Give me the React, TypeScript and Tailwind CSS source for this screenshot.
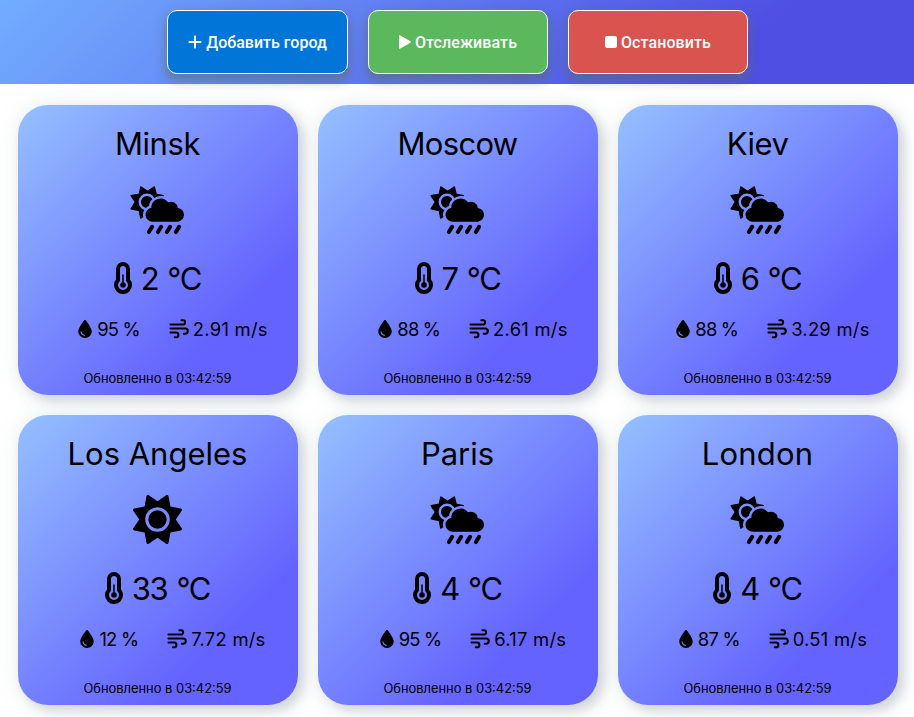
import { FaDroplet, FaPlus, FaStop, FaSun } from "react-icons/fa6";

interface City {
  name: string;
  tracking: string;
  temp: number;
  humidity: number;
  wind: string;
  sunny?: boolean;
}

const cities: City[] = [
  { name: "Minsk", tracking: "tracking-[-0.4px]", temp: 2, humidity: 95, wind: "2.91" },
  { name: "Moscow", tracking: "tracking-[-0.7px]", temp: 7, humidity: 88, wind: "2.61" },
  { name: "Kiev", tracking: "tracking-[-0.5px]", temp: 6, humidity: 88, wind: "3.29" },
  { name: "Los Angeles", tracking: "tracking-normal", temp: 33, humidity: 12, wind: "7.72", sunny: true },
  { name: "Paris", tracking: "tracking-normal", temp: 4, humidity: 95, wind: "6.17" },
  { name: "London", tracking: "tracking-[0.2px]", temp: 4, humidity: 87, wind: "0.51" },
];

const buttonBase =
  "flex h-16 items-center justify-center gap-[3px] whitespace-nowrap rounded-[10px] border border-white text-base text-white shadow-[0_5px_10px_2px_rgba(90,105,105,0.55)]";

function Thermometer() {
  return (
    <svg viewBox="0 0 18 32" className="mb-0.5 h-8 w-[18px]" fill="none" stroke="currentColor">
      <path d="M4 7a5 5 0 0 1 10 0v11.1a7 7 0 1 1-10 0z" strokeWidth="4" />
      <path d="M9 13V23" strokeWidth="1.5" strokeLinecap="round" />
      <circle cx="9" cy="23" r="2.8" fill="currentColor" stroke="none" />
    </svg>
  );
}

function Play() {
  return (
    <svg viewBox="0 0 14 16" className="h-4 w-3.5" fill="currentColor" stroke="currentColor">
      <path d="M1.6 1.7v12.6L12.4 8z" strokeWidth="1.2" strokeLinejoin="round" />
    </svg>
  );
}

function Wind() {
  return (
    <svg
      viewBox="0 0 20 20"
      className="size-5"
      fill="none"
      stroke="currentColor"
      strokeWidth="2.1"
      strokeLinecap="round"
    >
      <path d="M1.5 5.5H14a2.1 2.1 0 0 0 0-4.2h-1.6" />
      <path d="M1.5 9.5H16.2a2.6 2.6 0 0 1 0 5.2h-1.4" />
      <path d="M1.5 13.5H7a2.4 2.4 0 0 1 0 4.8H5.8" />
    </svg>
  );
}

const cloudPath =
  "M22.5 36.7A7 7 0 0 1 21.3 22.8A9.3 9.3 0 0 1 38 17.3A7 7 0 0 1 47.8 22.9A6.95 6.95 0 0 1 48 36.7z";

function SunRain() {
  return (
    <svg viewBox="0 0 56 50" className="h-[50px] w-[56px]" fill="currentColor">
      <defs>
        <mask id="sun-cutout" maskUnits="userSpaceOnUse" x="-2" y="-2" width="60" height="54">
          <rect x="-2" y="-2" width="60" height="54" fill="white" />
          <circle cx="17" cy="17" r="7.2" fill="none" stroke="black" strokeWidth="2.4" />
          <path d={cloudPath} fill="black" stroke="black" strokeWidth="5" />
        </mask>
      </defs>
      <g mask="url(#sun-cutout)">
        <path
          d="M10.8 1.8L17.7 6.2L24.4 1.8L26.2 9.2L33.4 10.7L29 17L33.4 24L25.6 25.6L23.7 33.4L17 29L10.7 33.2L9.2 25.6L1 23.8L5.2 17L1 10.7L9.2 9.2z"
          stroke="currentColor"
          strokeWidth="1.2"
          strokeLinejoin="round"
        />
      </g>
      <path d={cloudPath} />
      <path
        d="M22.1 41.8L18.9 47M31.1 41.8L27.9 47M40.1 41.8L36.9 47M49.1 41.8L45.9 47"
        stroke="currentColor"
        strokeWidth="4.1"
        strokeLinecap="round"
      />
    </svg>
  );
}

function Card({ city }: { city: City }) {
  return (
    <article className="flex h-[290px] w-[280px] flex-col items-center rounded-[30px] bg-linear-[135deg,#95c0ff_0%,#6463ff_75%] pt-5 text-black shadow-[6px_6px_12px_0px_rgba(170,180,188,0.5),0px_0px_20px_0px_rgba(180,190,196,0.25)]">
      <h2 className={`h-[38px] whitespace-nowrap pr-px text-[31px] leading-[38px] ${city.tracking}`}>{city.name}</h2>
      <div className="mt-[21px] flex h-[51px] items-center justify-center">
        {city.sunny ? <FaSun className="mr-px size-[49px]" /> : <SunRain />}
      </div>
      <div className="mt-[25px] flex h-[38px] items-center gap-[9px] pr-px text-[31px] leading-[38px]">
        <Thermometer />
        <span className="whitespace-nowrap tracking-[-1.3px] [word-spacing:1.5px]">{city.temp} °C</span>
      </div>
      <div className="mt-[19px] flex h-6 items-center text-[18.4px] leading-6">
        <div className="ml-[30px] flex items-center gap-[5px]">
          <FaDroplet className="h-[18px] w-[14px]" />
          <span className="whitespace-nowrap tracking-[-0.8px]">{city.humidity} %</span>
        </div>
        <div className="ml-[29px] flex items-center gap-1">
          <Wind />
          <span className="whitespace-nowrap tracking-[0.25px]">{city.wind} m/s</span>
        </div>
      </div>
      <p className="mt-[30px] whitespace-nowrap pr-px text-[12.9px] leading-4">Обновленно в 03:42:59</p>
    </article>
  );
}

export default function App() {
  return (
    <div className="min-h-[717px] overflow-hidden bg-white font-['Inter','Noto_Sans',sans-serif]">
      <header className="flex h-[84px] justify-center gap-5 bg-linear-[135deg,#72adff_0%,#4f4fe3_80%] pt-2.5 font-['Roboto','Noto_Sans',sans-serif] font-medium">
        <button className={`${buttonBase} w-[181px] bg-[#0275d8]`}>
          <FaPlus className="size-4" />
          <span className="pt-0.5">Добавить город</span>
        </button>
        <button className={`${buttonBase} w-[180px] bg-[#5cb85c]`}>
          <Play />
          <span className="pt-0.5 tracking-[0.1px]">Отслеживать</span>
        </button>
        <button className={`${buttonBase} w-[180px] bg-[#d9534f]`}>
          <FaStop className="h-4 w-3.5" />
          <span className="pt-0.5 tracking-[0.1px]">Остановить</span>
        </button>
      </header>
      <main className="mt-[21px] grid grid-cols-[repeat(3,280px)] gap-5 pl-[18px]">
        {cities.map((city) => (
          <Card key={city.name} city={city} />
        ))}
      </main>
    </div>
  );
}
